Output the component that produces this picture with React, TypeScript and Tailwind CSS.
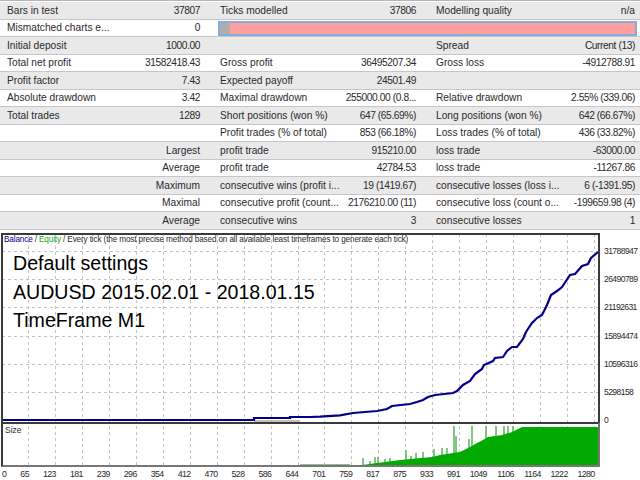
const rows = [
  ["Bars in test", "37807", "Ticks modelled", "37806", "Modelling quality", "n/a"],
  ["Mismatched charts e...", "0"],
  ["Initial deposit", "1000.00", "", "", "Spread", "Current (13)"],
  ["Total net profit", "31582418.43", "Gross profit", "36495207.34", "Gross loss", "-4912788.91"],
  ["Profit factor", "7.43", "Expected payoff", "24501.49", "", ""],
  ["Absolute drawdown", "3.42", "Maximal drawdown", "255000.00 (0.8...", "Relative drawdown", "2.55% (339.06)"],
  ["Total trades", "1289", "Short positions (won %)", "647 (65.69%)", "Long positions (won %)", "642 (66.67%)"],
  ["", "", "Profit trades (% of total)", "853 (66.18%)", "Loss trades (% of total)", "436 (33.82%)"],
  ["", "Largest", "profit trade", "915210.00", "loss trade", "-63000.00"],
  ["", "Average", "profit trade", "42784.53", "loss trade", "-11267.86"],
  ["", "Maximum", "consecutive wins (profit i...", "19 (1419.67)", "consecutive losses (loss i...", "6 (-1391.95)"],
  ["", "Maximal", "consecutive profit (count...", "2176210.00 (11)", "consecutive loss (count o...", "-199659.98 (4)"],
  ["", "Average", "consecutive wins", "3", "consecutive losses", "1"],
];

const xLabels = ["65", "123", "181", "239", "296", "354", "412", "470", "528", "586", "644", "701", "759", "817", "875", "933", "991", "1049", "1106", "1164", "1222", "1280"];
const yLabels = ["31788947", "26490789", "21192631", "15894474", "10596316", "5298158", "0"];

const curve =
  "2,420 254,420 254,418 290,418 290,417 310,417 320,416.7 340,415.3 353,413 377,411 387,409 392,406 410,404 417,402 423,400 428,397 435,395 453,393 457,391 463,385 470,381 475,374 482,369 484,365 493,361 495,358 503,357 507,351 512,347 517,347 523,339 526,332 532,323 537,318 542,315 547,305 551,295 557,291 562,287 570,275 575,274 582,266 588,264 591,258 598,252";

const sizeFill =
  "350,466 350,465.7 362,465 400,460 432,457 440,455 460,452 470,447 477,443 483,440 488,437 495,436 502,435 512,432 522,427 598,427 598,466";

const spikes = [
  [363, 458], [370, 461], [375, 457], [378, 457], [385, 459], [390, 458], [406, 450], [411, 456], [416, 453], [423, 452],
  [434, 449], [442, 448], [447, 448], [454, 426], [456, 436], [469, 439], [472, 426], [486, 426], [496, 426], [504, 426], [508, 426], [513, 426],
];

const numCls = (v: string) => (/\d/.test(v) ? "tracking-[-0.4px]" : "");

function Grid({ ys }: { ys: number[] }) {
  const xs = Array.from({ length: 22 }, (_, i) => Math.round(28 + i * 26.95) + 0.5);
  return (
    <g stroke="#c4c4c4" strokeWidth="1" strokeDasharray="3 3" fill="none" shapeRendering="crispEdges">
      {xs.map((x) => (
        <line key={x} x1={x} x2={x} y1="234" y2="468" />
      ))}
      {ys.map((y) => (
        <line key={y} x1="2" x2="598" y1={y} y2={y} />
      ))}
    </g>
  );
}

export default function App() {
  return (
    <div className="w-[640px] h-[480px] overflow-hidden bg-white text-[#2a2a2a] font-['Liberation_Sans',sans-serif] text-[10.2px]">
      {/* stats table */}
      <div className="h-[233px] pt-[1px] border-t border-[#b5b5b5]">
        {rows.map((r, i) => (
          <div
            key={i}
            className={`h-[17.5px] pt-[1px] border-b border-[#c6c6c6] grid grid-cols-[200px_216px_219px] items-center leading-none whitespace-nowrap ${i % 2 === 0 ? "bg-[#e9e9e9]" : "bg-white"}`}
          >
            <div className="flex justify-between pl-[7px]">
              <span>{r[0]}</span>
              <span className={numCls(r[1])}>{r[1]}</span>
            </div>
            {r.length === 2 ? (
              <div className="col-span-2 ml-[18px] mr-[-2px] h-[15px] border-2 border-[#86aedb] bg-[#ff9f9f] flex">
                <div className="w-[10px] bg-[#aeaeae]" />
              </div>
            ) : (
              <>
                <div className="flex justify-between pl-[20px]">
                  <span>{r[2]}</span>
                  <span className={numCls(r[3])}>{r[3]}</span>
                </div>
                <div className="flex justify-between pl-[20px]">
                  <span>{r[4]}</span>
                  <span className={numCls(r[5])}>{r[5]}</span>
                </div>
              </>
            )}
          </div>
        ))}
      </div>

      {/* chart */}
      <div className="flex">
        <div className="ml-[1px] w-[599px]">
          <div className="relative h-[189px] border-x-2 border-t-2 border-[#3a3a3a] overflow-hidden">
            <svg className="block" width="595" height="187" viewBox="3 235 595 187">
              <Grid ys={[251, 279, 307, 336, 364, 392]} />
              <polyline points="254,421 300,421" fill="none" stroke="#b9ae8e" strokeWidth="1.5" />
              <polyline points={curve} fill="none" stroke="#00008b" strokeWidth="2.2" />
            </svg>
            <div className="absolute left-0 top-0 text-[8.2px] tracking-[-0.14px] leading-none pt-[1px] pl-[1px] whitespace-nowrap">
              <span className="text-[#00008b]">Balance</span> / <span className="text-[#22aa22]">Equity</span> / Every tick (the most precise method based on all available least timeframes to generate each tick)
            </div>
            <div className="absolute left-[10px] top-[14px] text-[19.6px] leading-[28.5px] text-black">
              <div>Default settings</div>
              <div>AUDUSD 2015.02.01 - 2018.01.15</div>
              <div>TimeFrame M1</div>
            </div>
          </div>
          <div className="relative h-[45px] border-2 border-[#3a3a3a] border-b-[#777777] border-r-[#777777] overflow-hidden">
            <svg className="block" width="595" height="41" viewBox="3 424 595 41">
              <Grid ys={[]} />
              <line x1="300" x2="350" y1="464.5" y2="464.5" stroke="#8fbf8f" strokeWidth="1" />
              {spikes.map(([x, y]) => (
                <line key={x} x1={x} x2={x} y1={y} y2="466" stroke="#58b558" strokeWidth="1.5" />
              ))}
              <polygon points={sizeFill} fill="#00aa00" />
            </svg>
            <div className="absolute left-[2px] top-[2px] text-[8.5px] leading-none">Size</div>
          </div>
          <div className="flex text-[8.8px] tracking-[-0.6px] leading-none pt-[3px]">
            <div className="w-0 pl-[1px]">0</div>
            {xLabels.map((l) => (
              <div key={l} className="w-[26.95px] text-right shrink-0 whitespace-nowrap">{l}</div>
            ))}
          </div>
        </div>
        <div className="pl-[4px] pt-[12px] text-[8.6px] tracking-[-0.6px]">
          {yLabels.map((l) => (
            <div key={l} className="h-[28.2px] leading-[12px]">{l}</div>
          ))}
        </div>
      </div>
    </div>
  );
}
